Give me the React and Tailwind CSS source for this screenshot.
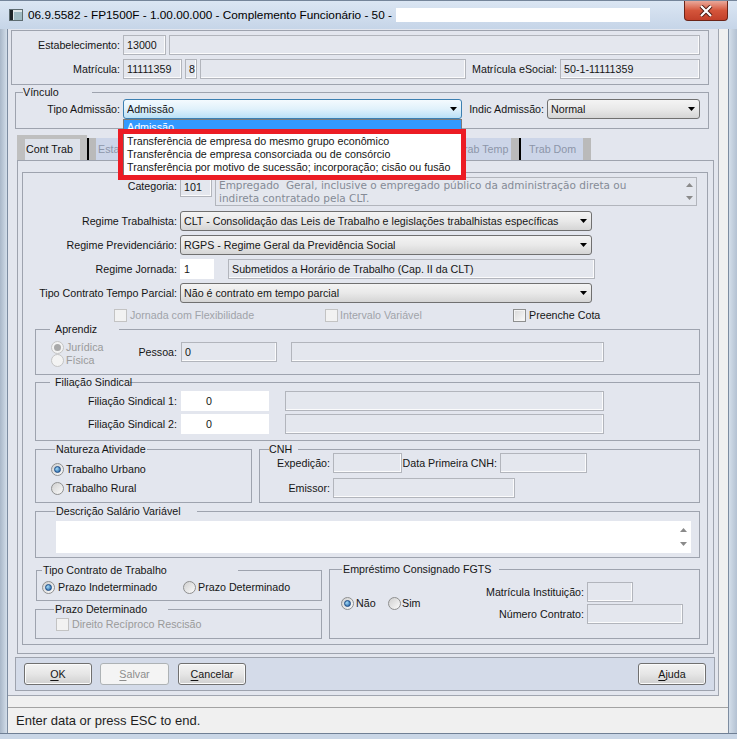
import React from 'react';

function Lbl({ className = '', children }) {
  return (
    <div className={`shrink-0 flex items-center justify-end whitespace-nowrap ${className}`}>
      {children}
    </div>
  );
}

function Box({ className = '', white = false, children }) {
  return (
    <div
      className={`shrink-0 h-[20px] border flex items-center px-[3px] whitespace-nowrap overflow-hidden ${
        white
          ? 'bg-white border-white'
          : 'bg-[#e4e7ee] border-[#b2b5bc] shadow-[inset_-1px_-1px_0_#fbfbfc]'
      } ${className}`}
    >
      {children}
    </div>
  );
}

function Select({ className = '', value, focused = false }) {
  return (
    <div
      className={`shrink-0 h-[20px] rounded-[3px] border flex items-center pl-[3px] pr-[4px] whitespace-nowrap ${
        focused
          ? 'border-[#3c7fb1] bg-linear-to-b from-[#f4fafe] via-[#e0f1fb] to-[#b9e0f7]'
          : 'border-[#707070] bg-linear-to-b from-[#f4f4f4] via-[#e9e9e9] to-[#d5d5d5]'
      } ${className}`}
    >
      <span className="flex-1 overflow-hidden">{value}</span>
      <svg width="7" height="4" viewBox="0 0 7 4" className="shrink-0">
        <path d="M0 0H7L3.5 4Z" fill="#000" />
      </svg>
    </div>
  );
}

function Radio({ checked = false, disabled = false }) {
  return (
    <span
      className={`w-[13px] h-[13px] shrink-0 rounded-full border flex items-center justify-center ${
        disabled
          ? 'border-[#c4c4c4] bg-[#f3f3f3]'
          : 'border-[#8e8f8f] bg-linear-to-br from-[#d0d0d0] to-[#fbfbfb]'
      }`}
    >
      {checked && (
        <span
          className={`w-[7px] h-[7px] rounded-full ${
            disabled
              ? 'bg-[#a9a9a9]'
              : 'bg-radial-[at_35%_35%] from-[#a4dcf8] to-[#14539c] border border-[#1b4a84]'
          }`}
        />
      )}
    </span>
  );
}

function Check({ disabled = false }) {
  return (
    <span
      className={`w-[13px] h-[13px] shrink-0 border ${
        disabled
          ? 'border-[#c3c3c3] bg-[#f2f2f2]'
          : 'border-[#8e8f8f] bg-linear-to-br from-[#d8d8d8] to-[#fbfbfb] shadow-[inset_0_0_0_1px_#f4f4f4]'
      }`}
    />
  );
}

function Group({ title, labelClass = '', className = '', children }) {
  return (
    <div className={`relative shrink-0 border border-[#9ea3ae] ${className}`}>
      {title && (
        <div
          className={`absolute top-[-7px] h-[13px] leading-[13px] bg-[#e3e6ee] whitespace-nowrap ${labelClass}`}
        >
          {title}
        </div>
      )}
      {children}
    </div>
  );
}

function Btn({ className = '', disabled = false, k, rest }) {
  return (
    <div
      className={`shrink-0 h-[22px] rounded-[3px] border flex items-center justify-center ${
        disabled
          ? 'border-[#adb2b5] bg-[#f4f4f4] text-[#8d8d8d]'
          : 'border-[#707070] bg-linear-to-b from-[#f3f3f3] via-[#e6e6e6] to-[#d0d0d0] shadow-[inset_0_0_0_1px_#fbfbfb]'
      } ${className}`}
    >
      <span>
        <span className="underline underline-offset-2">{k}</span>
        {rest}
      </span>
    </div>
  );
}

function Tab({ label, first = false, last = false }) {
  return (
    <div className="flex h-[22px] shrink-0">
      {first && <div className="w-[7px] bg-[#bababa]" />}
      <div
        className={`${
          first ? 'w-[55px] pl-[2px]' : 'w-[62px] pl-[8px]'
        } bg-[#ccd5e8] text-[#8c95a8] flex items-center whitespace-nowrap overflow-hidden`}
      >
        {label}
      </div>
      <div className="w-[8px] bg-[#bababa]" />
      {!last && <div className="w-[2px] bg-black" />}
    </div>
  );
}

function ScrollArrows({ className = '' }) {
  return (
    <div className={`w-[14px] shrink-0 flex flex-col items-center justify-between ${className}`}>
      <svg width="7" height="4" viewBox="0 0 7 4">
        <path d="M0 4H7L3.5 0Z" fill="#8a8a8a" />
      </svg>
      <svg width="7" height="4" viewBox="0 0 7 4">
        <path d="M0 0H7L3.5 4Z" fill="#8a8a8a" />
      </svg>
    </div>
  );
}

const tiposAdmissao = [
  'Transferência de empresa do mesmo grupo econômico',
  'Transferência de empresa consorciada ou de consórcio',
  'Transferência por motivo de sucessão; incorporação; cisão ou fusão',
];

export default function App() {
  return (
    <div className="relative w-[737px] h-[739px] overflow-hidden flex flex-col bg-[#c9d7e8] font-['Liberation_Sans',Arial,sans-serif] text-[10.7px] leading-[13px] text-[#151515]">
      {/* Title bar */}
      <div className="h-[29px] shrink-0 flex items-start bg-linear-to-b from-[#dbe6f3] to-[#c6d5e8] border-t border-[#75859a]">
        <div className="flex items-center h-[28px] pl-[9px]">
          <svg width="14" height="12" viewBox="0 0 14 12" className="shrink-0">
            <rect x="0.5" y="0.5" width="13" height="11" fill="#dfe7ea" stroke="#5d6b70" />
            <rect x="1" y="1" width="3" height="10" fill="#1c2326" />
            <rect x="5" y="3" width="8" height="8" fill="#9fb9c2" />
          </svg>
          <span className="ml-[5px] text-[11.8px] text-black whitespace-nowrap">
            06.9.5582 - FP1500F - 1.00.00.000 - Complemento Funcionário - 50 -
          </span>
          <div className="ml-[4px] w-[254px] h-[14px] bg-white" />
        </div>
        <div className="ml-auto mr-[9px] w-[44px] h-[20px] rounded-b-[4px] border border-t-0 border-[#6b2418] bg-linear-to-b from-[#e9a89a] via-[#d4553b] to-[#c2402a] flex items-center justify-center">
          <svg width="14" height="12" viewBox="0 0 14 12">
            <path d="M2 1L12 11M12 1L2 11" stroke="#4a1a12" strokeWidth="4" />
            <path d="M2 1L12 11M12 1L2 11" stroke="#fff" strokeWidth="2.2" />
          </svg>
        </div>
      </div>

      {/* Body */}
      <div className="flex h-[704px] shrink-0">
        <div className="w-[8px] shrink-0 bg-linear-to-r from-[#a9b7c8] to-[#d3deea] border-r border-[#7d8ca0]" />

        <div className="w-[720px] shrink-0 flex flex-col bg-[#f0f0f0]">
          {/* Form */}
          <div className="w-[711px] h-[667px] shrink-0 bg-[#e3e6ee] border-r border-b border-[#a1a6b0] flex flex-col">
            {/* Header */}
            <div className="mt-[1px] ml-[3px] w-[698px] h-[55px] shrink-0 border border-[#9ea3ae] pt-[4px]">
              <div className="flex h-[20px]">
                <Lbl className="w-[108px]">Estabelecimento:</Lbl>
                <Box className="ml-[3px] w-[43px]">13000</Box>
                <Box className="ml-[3px] w-[531px]" />
              </div>
              <div className="flex h-[20px] mt-[4px]">
                <Lbl className="w-[108px]">Matrícula:</Lbl>
                <Box className="ml-[3px] w-[59px]">11111359</Box>
                <Box className="ml-[3px] w-[12px]">8</Box>
                <Box className="ml-[3px] w-[266px]" />
                <Lbl className="w-[91px]">Matrícula eSocial:</Lbl>
                <Box className="ml-[3px] w-[140px]">50-1-11111359</Box>
              </div>
            </div>

            {/* Vínculo */}
            <Group
              title="Vínculo"
              labelClass="left-[7px] w-[69px]"
              className="mt-[7px] ml-[7px] w-[694px] h-[37px] pt-[6px]"
            >
              <div className="flex h-[20px]">
                <Lbl className="w-[104px]">Tipo Admissão:</Lbl>
                <Select focused className="ml-[3px] w-[339px]" value="Admissão" />
                <Lbl className="w-[82px]">Indic Admissão:</Lbl>
                <Select className="ml-[3px] w-[153px]" value="Normal" />
              </div>
            </Group>

            {/* Tabs (the middle ones lie under the open list) */}
            <div className="mt-[6px] ml-[9px] h-[25px] flex items-end shrink-0">
              <div className="w-[70px] h-[25px] shrink-0 bg-[#bfbfbf] pt-[4px] pl-[8px] pr-[7px] flex">
                <div className="flex-1 bg-[#dee2ea] flex items-center pl-[1px] text-[#111]">Cont Trab</div>
              </div>
              <div className="w-[2px] h-[22px] bg-black" />
              <Tab first label="Esta" />
              <Tab label="" />
              <Tab label="" />
              <Tab label="" />
              <Tab label="" />
              <Tab label={<span className="ml-[7px]">rab Temp</span>} />
              <Tab last label="Trab Dom" />
            </div>

            {/* Tab panel */}
            <div className="ml-[9px] w-[697px] h-[494px] shrink-0 border border-[#9ea3ae] pt-[11px] pl-[4px]">
              <div className="w-[686px] h-[473px] border border-[#9ea3ae] flex flex-col">
                {/* Categoria */}
                <div className="flex mt-[4px] h-[29px] shrink-0">
                  <div className="w-[154px] shrink-0 text-right pt-[3px]">Categoria:</div>
                  <Box className="ml-[3px] w-[32px]">101</Box>
                  <div className="ml-[3px] w-[482px] h-[29px] shrink-0 border border-[#b2b5bc] bg-[#e4e7ee] flex font-['DejaVu_Sans',sans-serif] text-[10.5px] leading-[13px] text-[#858b96]">
                    <div className="flex-1 pl-[3px] pt-[1px] whitespace-nowrap overflow-hidden">
                      Empregado&nbsp; Geral, inclusive o empregado público da administração direta ou
                      <br />
                      indireta contratado pela CLT.
                    </div>
                    <ScrollArrows className="py-[5px]" />
                  </div>
                </div>

                <div className="flex mt-[5px] h-[20px] shrink-0">
                  <Lbl className="w-[154px]">Regime Trabalhista:</Lbl>
                  <Select
                    className="ml-[3px] w-[412px]"
                    value="CLT - Consolidação das Leis de Trabalho e legislações trabalhistas específicas"
                  />
                </div>

                <div className="flex mt-[4px] h-[20px] shrink-0">
                  <Lbl className="w-[154px]">Regime Previdenciário:</Lbl>
                  <Select className="ml-[3px] w-[412px]" value="RGPS - Regime Geral da Previdência Social" />
                </div>

                <div className="flex mt-[4px] h-[20px] shrink-0">
                  <Lbl className="w-[154px]">Regime Jornada:</Lbl>
                  <Box white className="ml-[3px] w-[34px]">1</Box>
                  <Box className="ml-[14px] w-[367px]">Submetidos a Horário de Trabalho (Cap. II da CLT)</Box>
                </div>

                <div className="flex mt-[4px] h-[20px] shrink-0">
                  <Lbl className="w-[154px]">Tipo Contrato Tempo Parcial:</Lbl>
                  <Select className="ml-[3px] w-[412px]" value="Não é contrato em tempo parcial" />
                </div>

                {/* Checkboxes */}
                <div className="flex mt-[6px] h-[13px] shrink-0 items-center">
                  <div className="ml-[91px] w-[211px] flex items-center gap-[3px] text-[#a0a3a9]">
                    <Check disabled />
                    <span>Jornada com Flexibilidade</span>
                  </div>
                  <div className="w-[188px] flex items-center gap-[2px] text-[#a0a3a9]">
                    <Check disabled />
                    <span>Intervalo Variável</span>
                  </div>
                  <div className="flex items-center gap-[3px]">
                    <Check />
                    <span>Preenche Cota</span>
                  </div>
                </div>

                {/* Aprendiz */}
                <Group
                  title="Aprendiz"
                  labelClass="left-[14px] pl-[5px] w-[69px]"
                  className="mt-[7px] ml-[12px] w-[665px] h-[46px] flex"
                >
                  <div className="w-[103px] shrink-0 pl-[15px] pt-[11px] text-[#9a9a9a]">
                    <div className="flex items-center h-[13px] gap-[2px]">
                      <Radio checked disabled />
                      <span>Jurídica</span>
                    </div>
                    <div className="flex items-center h-[13px] gap-[2px]">
                      <Radio disabled />
                      <span>Física</span>
                    </div>
                  </div>
                  <div className="flex mt-[12px] h-[20px]">
                    <Lbl className="w-[38px]">Pessoa:</Lbl>
                    <Box className="ml-[4px] w-[96px]">0</Box>
                    <Box className="ml-[14px] w-[313px]" />
                  </div>
                </Group>

                {/* Filiação Sindical */}
                <Group
                  title="Filiação Sindical"
                  labelClass="left-[14px] pl-[5px] w-[80px]"
                  className="mt-[7px] ml-[12px] w-[665px] h-[59px]"
                >
                  <div className="flex mt-[8px] h-[20px]">
                    <Lbl className="w-[141px]">Filiação Sindical 1:</Lbl>
                    <Box white className="ml-[4px] w-[88px]">
                      <span className="ml-[21px]">0</span>
                    </Box>
                    <Box className="ml-[16px] w-[319px]" />
                  </div>
                  <div className="flex mt-[3px] h-[20px]">
                    <Lbl className="w-[141px]">Filiação Sindical 2:</Lbl>
                    <Box white className="ml-[4px] w-[88px]">
                      <span className="ml-[21px]">0</span>
                    </Box>
                    <Box className="ml-[16px] w-[319px]" />
                  </div>
                </Group>

                {/* Natureza / CNH */}
                <div className="flex mt-[8px] ml-[12px] h-[54px] shrink-0">
                  <Group
                    title="Natureza Atividade"
                    labelClass="left-[19px] pl-[1px] w-[92px]"
                    className="w-[217px] h-[54px] pl-[15px]"
                  >
                    <div className="flex items-center h-[13px] mt-[13px] gap-[2px]">
                      <Radio checked />
                      <span>Trabalho Urbano</span>
                    </div>
                    <div className="flex items-center h-[13px] mt-[6px] gap-[2px]">
                      <Radio />
                      <span>Trabalho Rural</span>
                    </div>
                  </Group>
                  <Group
                    title="CNH"
                    labelClass="left-[9px] w-[29px]"
                    className="ml-[7px] w-[441px] h-[54px]"
                  >
                    <div className="flex mt-[3px] h-[20px]">
                      <Lbl className="w-[70px]">Expedição:</Lbl>
                      <Box className="ml-[3px] w-[69px]" />
                      <Lbl className="w-[95px]">Data Primeira CNH:</Lbl>
                      <Box className="ml-[3px] w-[87px]" />
                    </div>
                    <div className="flex mt-[5px] h-[20px]">
                      <Lbl className="w-[70px]">Emissor:</Lbl>
                      <Box className="ml-[3px] w-[182px]" />
                    </div>
                  </Group>
                </div>

                {/* Descrição Salário Variável */}
                <Group
                  title="Descrição Salário Variável"
                  labelClass="left-[19px] pl-[1px] w-[142px]"
                  className="mt-[8px] ml-[12px] w-[665px] h-[47px]"
                >
                  <div className="ml-[20px] mt-[9px] w-[635px] h-[32px] bg-white flex justify-end">
                    <ScrollArrows className="py-[7px] mr-[1px]" />
                  </div>
                </Group>

                {/* Bottom groups */}
                <div className="flex mt-[11px] ml-[12px] shrink-0">
                  <div className="w-[287px] shrink-0 flex flex-col">
                    <Group
                      title="Tipo Contrato de Trabalho"
                      labelClass="left-[5px] pl-[1px] w-[196px]"
                      className="mt-[1px] ml-[1px] w-[286px] h-[31px]"
                    >
                      <div className="flex items-center h-[13px] mt-[10px] pl-[5px]">
                        <div className="w-[141px] flex items-center gap-[3px]">
                          <Radio checked />
                          <span>Prazo Indeterminado</span>
                        </div>
                        <div className="flex items-center gap-[2px]">
                          <Radio />
                          <span>Prazo Determinado</span>
                        </div>
                      </div>
                    </Group>
                    <Group
                      title="Prazo Determinado"
                      labelClass="left-[18px] pl-[1px] w-[114px]"
                      className="mt-[8px] w-[287px] h-[30px]"
                    >
                      <div className="flex items-center h-[13px] mt-[8px] pl-[20px] gap-[3px] text-[#9a9a9a]">
                        <Check disabled />
                        <span>Direito Recíproco Rescisão</span>
                      </div>
                    </Group>
                  </div>
                  <Group
                    title="Empréstimo Consignado FGTS"
                    labelClass="left-[12px] pl-[1px] w-[157px]"
                    className="ml-[7px] w-[371px] h-[70px] flex"
                  >
                    <div className="w-[140px] shrink-0 pl-[11px] pt-[27px]">
                      <div className="flex items-center h-[13px]">
                        <div className="w-[47px] flex items-center gap-[2px]">
                          <Radio checked />
                          <span>Não</span>
                        </div>
                        <div className="flex items-center gap-[1px]">
                          <Radio />
                          <span>Sim</span>
                        </div>
                      </div>
                    </div>
                    <div className="flex flex-col">
                      <div className="flex mt-[12px] h-[20px]">
                        <Lbl className="w-[114px]">Matrícula Instituição:</Lbl>
                        <Box className="ml-[3px] w-[46px]" />
                      </div>
                      <div className="flex mt-[2px] h-[20px]">
                        <Lbl className="w-[114px]">Número Contrato:</Lbl>
                        <Box className="ml-[3px] w-[96px]" />
                      </div>
                    </div>
                  </Group>
                </div>
              </div>
            </div>

            {/* Button bar */}
            <div className="mt-[3px] ml-[7px] w-[700px] h-[34px] shrink-0 bg-[#d4dbe9] border border-[#9ea3ae] flex items-start pt-[5px] pl-[8px] pr-[8px]">
              <Btn className="w-[68px]" k="O" rest="K" />
              <Btn disabled className="ml-[8px] w-[69px]" k="S" rest="alvar" />
              <Btn className="ml-[9px] w-[68px]" k="C" rest="ancelar" />
              <Btn className="ml-auto w-[68px]" k="A" rest="juda" />
            </div>
          </div>

          <div className="h-[11px] shrink-0" />
          <div className="h-[26px] shrink-0 border-t border-[#a3a3a3] flex items-center pl-[8px] text-[13px] text-[#1e1e1e]">
            Enter data or press ESC to end.
          </div>
        </div>

        <div className="flex-1 bg-linear-to-r from-[#d3deea] to-[#b3c1d2] border-l border-[#7d8ca0]" />
      </div>
      <div className="flex-1 bg-[#c9d6e6] border-t border-[#6f7f94]" />

      {/* Open drop-down of Tipo Admissão */}
      <div className="absolute left-[123px] top-[119px] w-[339px] h-[58px] bg-white border border-[#7a7a7a]">
        <div className="h-[14px] leading-[14px] bg-[#3399ff] text-white pl-[3px]">Admissão</div>
        <div className="pt-[1px]">
          {tiposAdmissao.map((t) => (
            <div key={t} className="h-[13px] pl-[3px] whitespace-nowrap">
              {t}
            </div>
          ))}
        </div>
      </div>
      <div className="absolute left-[118px] top-[129px] w-[348px] h-[51px] border-[5px] border-[#ec1c24]" />
    </div>
  );
}
